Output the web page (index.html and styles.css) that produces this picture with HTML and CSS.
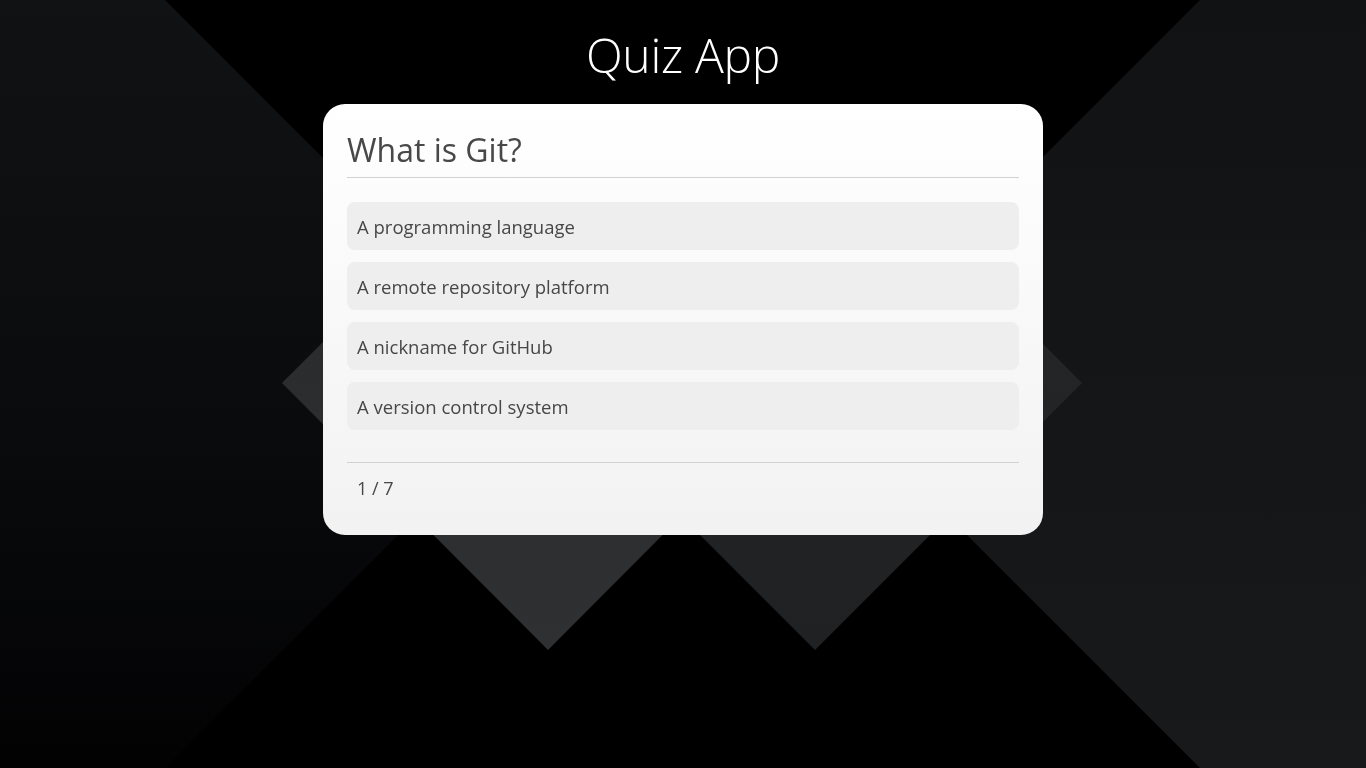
FILE: index.html
```html
<!DOCTYPE html>
<html lang="en">
<head>
<meta charset="utf-8">
<title>Quiz App</title>
<link rel="stylesheet" href="styles.css">
</head>
<body>
<svg class="backdrop" viewBox="0 0 1366 768" preserveAspectRatio="none" aria-hidden="true">
  <defs>
    <linearGradient id="gLeft" x1="0" y1="0" x2="0" y2="1" gradientUnits="objectBoundingBox">
      <stop offset="0.15" stop-color="#111214"/>
      <stop offset="0.5" stop-color="#0b0c0e"/>
      <stop offset="0.85" stop-color="#020203"/>
    </linearGradient>
    <linearGradient id="gRight" x1="0" y1="0" x2="0" y2="1">
      <stop offset="0.15" stop-color="#111214"/>
      <stop offset="0.85" stop-color="#18191b"/>
    </linearGradient>
    <linearGradient id="gA" x1="0" y1="0" x2="0" y2="1">
      <stop offset="0" stop-color="#28292b"/>
      <stop offset="1" stop-color="#2f3032"/>
    </linearGradient>
    <linearGradient id="gB" x1="0" y1="0" x2="0" y2="1">
      <stop offset="0" stop-color="#27282a"/>
      <stop offset="1" stop-color="#202123"/>
    </linearGradient>
  </defs>
  <rect x="0" y="0" width="1366" height="768" fill="#000"/>
  <polygon points="0,-165 549,384 0,933 -549,384" fill="url(#gLeft)"/>
  <polygon points="1366,-166 1916,384 1366,934 816,384" fill="url(#gRight)"/>
  <polygon points="548,117 814,383 548,650 282,383" fill="url(#gA)"/>
  <polygon points="815,116 1082,383 815,650 548,383" fill="url(#gB)"/>
</svg>

<main class="app">
  <h1 class="app-title">Quiz App</h1>
  <section class="card">
    <h2 class="question">What is Git?</h2>
    <ul class="answers">
      <li class="answer">A programming language</li>
      <li class="answer">A remote repository platform</li>
      <li class="answer">A nickname for GitHub</li>
      <li class="answer">A version control system</li>
    </ul>
    <footer class="progress">1 / 7</footer>
  </section>
</main>
</body>
</html>
```

FILE: styles.css
```css
* {
  box-sizing: border-box;
}

html, body {
  margin: 0;
  padding: 0;
  height: 100%;
}

body {
  background: #000;
  font-family: "Open Sans", "Noto Sans", "Liberation Sans", sans-serif;
  color: #444;
  overflow: hidden;
}

.backdrop {
  position: fixed;
  inset: 0;
  width: 100%;
  height: 100%;
  z-index: -1;
  display: block;
}

.app {
  display: flex;
  flex-direction: column;
  align-items: center;
  padding-top: 22px;
}

.app-title {
  margin: 0;
  height: 82px;
  font-size: 48px;
  line-height: 66px;
  font-weight: 300;
  color: #fff;
  letter-spacing: -0.3px;
}

.card {
  width: 720px;
  height: 431px;
  border-radius: 22px;
  background: linear-gradient(to bottom, #ffffff 0%, #f2f2f2 100%);
  padding: 26px 24px 24px;
  display: flex;
  flex-direction: column;
}

.question {
  margin: 0;
  font-size: 32px;
  font-weight: 400;
  line-height: 40px;
  color: #484848;
  padding-bottom: 7px;
  border-bottom: 1px solid #d2d2d2;
}

.answers {
  list-style: none;
  margin: 24px 0 0;
  padding: 0;
  display: flex;
  flex-direction: column;
  gap: 12px;
}

.answer {
  height: 48px;
  display: flex;
  align-items: center;
  padding: 1px 10px 0;
  background: #eeeeee;
  border-radius: 8px;
  font-size: 18.5px;
  color: #474747;
}

.progress {
  margin-top: 32px;
  border-top: 1px solid #d2d2d2;
  padding: 13px 10px 0;
  font-size: 18px;
  line-height: 24px;
  color: #474747;
}
```
